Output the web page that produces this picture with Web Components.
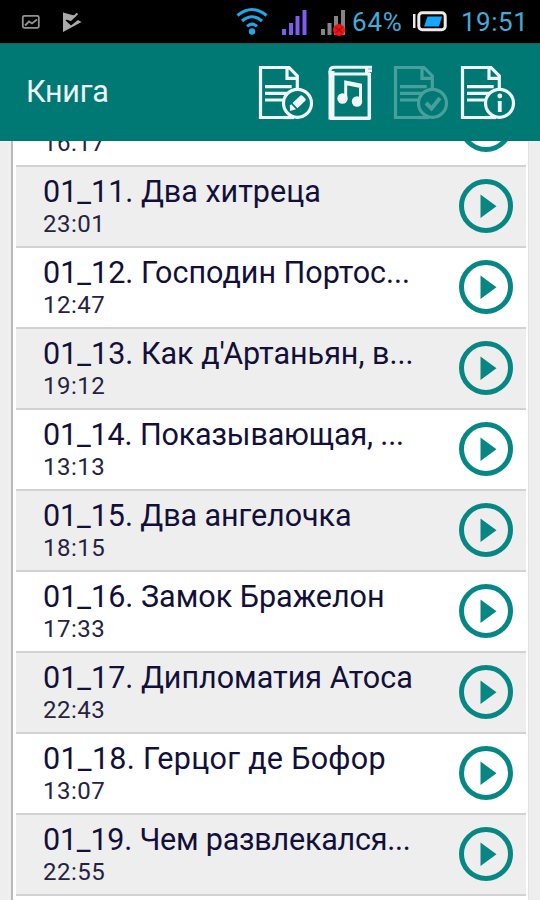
<!DOCTYPE html>
<html lang="ru">
<head>
<meta charset="utf-8">
<title>Книга</title>
<style>
html,body{margin:0;height:100%;overflow:hidden}
body{font-family:Roboto,"Noto Sans",sans-serif;background:#eee}
</style>
</head>
<body>
<book-screen></book-screen>
<script>
const define = (name, html, setup) => {
  const template = document.createElement('template');
  template.innerHTML = html;
  customElements.define(name, class extends HTMLElement {
    constructor() {
      super();
      this.attachShadow({mode: 'open'}).append(template.content.cloneNode(true));
    }
    connectedCallback() { if (setup) setup(this, this.shadowRoot); }
  });
};

define('status-bar', `
<style>
:host{display:flex;align-items:center;height:43px;box-sizing:border-box;background:#000;color:#42abd8;font-size:26px;line-height:43px;white-space:nowrap}
svg{display:block;flex:none}
.pct{width:62px;padding-left:1px;box-sizing:border-box;letter-spacing:.8px;margin-top:2px}
.time{margin-left:14px;letter-spacing:.5px;margin-top:2px}
</style>
<svg width="351" height="43" viewBox="0 0 351 43" fill="none">
  <rect x="22.800" y="15.800" width="16" height="12" rx="1.500" stroke="#929292" stroke-width="1.800"/>
  <path d="M25 25.500l4-4 3 2 5-4" stroke="#929292" stroke-width="1.800"/>
  <path d="M63 12.500V32L81.500 22l-3.500-2-7 5.500-5.500-5 2-2 3.500 2.500 5-5z" fill="#aaa"/>
  <path d="M63 12.500L72 17.500L70.500 21L65 19L63 24Z" fill="#aaa"/>
  <path d="M70.500 19.500l7-6" stroke="#aaa" stroke-width="2"/>
  <g stroke="#1fa7ec" stroke-width="3">
    <path d="M237.500 15.500Q252 3.500 266.500 15.500"/>
    <path d="M242 21Q252 12.500 262 21"/>
    <path d="M247 26.300Q252 22 257 26.300"/>
  </g>
  <circle cx="252" cy="31.500" r="3.200" fill="#1fa7ec"/>
  <path d="M282 29h4v6h-4zM289 23h4v12h-4zM295.500 16h4v19h-4zM302.500 10h4v25h-4z" fill="#805df0"/>
  <path d="M321 29h4v6h-4zM327.500 23h4v12h-4zM334 16h4v19h-4zM341 10h4v25h-4z" fill="#858585"/>
  <circle cx="339" cy="30" r="6" fill="#f01216"/>
  <path d="M335.500 27l7 6M335.500 33l7-6" stroke="#b01010" stroke-width="1.200"/>
</svg>
<span class="pct">64%</span>
<svg width="34" height="43" viewBox="0 0 34 43">
  <path d="M0 14h2.500v14H0z" fill="#e8e8e8"/>
  <rect x="5.800" y="12.800" width="26.400" height="17" rx="3.500" fill="none" stroke="#f0ebe8" stroke-width="3"/>
  <path d="M14.500 16.500H29L26 26.500H11z" fill="#13a8fb"/>
</svg>
<time class="time">19:51</time>`);

const PAGE = `<path d="M27 52.500H2.500V2.500H31L39.300 11V25M29 2.500V13.300H39"/><path d="M7 21.700H33.700M7 28.300H29.700M7 35H25"/><circle cx="39.500" cy="38.300" r="14"/><path d="M25 52.500H36"/>`;
const GLYPHS = {
  edit: PAGE + `<path class="solid" d="M34.500 38L42.500 30.500Q43.500 29.800 44.500 30.800L47.500 33.800Q48.300 34.800 47.300 35.800L39.500 43.300ZM33.300 39.300L38 44.300L32 46L31.800 40.500Z"/>`,
  check: PAGE + `<path d="M33 38L38.500 43.500L47 33" stroke-width="4"/>`,
  info: PAGE + `<path d="M39.800 36V47" stroke-width="3.800"/><path d="M37.800 36.800H41" stroke-width="1.600"/><circle class="solid" cx="39.800" cy="31" r="2.400"/>`,
  music: `<path d="M4.500 6V54.500" stroke-width="6"/><path d="M3 9V6Q3 2.300 7.500 2.300H45M6 9H43M39.500 2V9M40 5.700H45" stroke-width="3"/><path d="M3 53.300H43M42.300 8V54.500" stroke-width="3.500"/><path d="M18.700 33.500V17L33.500 20V35.500M18.700 18.500L33.500 21.500" stroke-width="3"/><circle class="solid" cx="15.500" cy="33.500" r="5.200"/><circle class="solid" cx="30" cy="36.500" r="5.200"/>`
};
define('tool-icon', `
<style>
:host{display:block;width:56px;height:56px}
:host([disabled]){opacity:.3}
svg{display:block;overflow:visible;fill:none;stroke:#f1f7f7;stroke-width:3.200}
.solid{fill:#f1f7f7;stroke:none}
</style><svg width="56" height="56" viewBox="0 0 56 56"></svg>`,
(host, root) => { root.querySelector('svg').innerHTML = GLYPHS[host.getAttribute('glyph')]; });

define('app-bar', `
<style>
:host{display:flex;height:98px;box-sizing:border-box;background:#007975;color:#edf6f5;padding:0 25px 0 26px;align-items:flex-start;box-shadow:inset 0 1px #16615e}
.heading{font:400 30.500px/36px Roboto,sans-serif;letter-spacing:-.25px;padding-top:31px;flex:1}
nav{display:grid;grid-template-columns:69px 66px 67px 55px;margin-top:22px}
</style>
<div class="heading"><slot></slot></div>
<nav>
  <tool-icon glyph="edit"></tool-icon><tool-icon glyph="music"></tool-icon>
  <tool-icon glyph="check" disabled></tool-icon><tool-icon glyph="info"></tool-icon>
</nav>`);

define('play-button', `
<style>:host{display:block;width:54px;height:54px}svg{display:block}</style>
<svg width="54" height="54" viewBox="0 0 54 54"><circle cx="27" cy="27" r="24.500" fill="none" stroke="#078783" stroke-width="5"/><path d="M21.500 15.500V39L37.500 27.200Z" fill="#078783"/></svg>`);

define('track-row', `
<style>
:host{display:flex;justify-content:space-between;height:81px;box-sizing:border-box;border-bottom:2px solid #d2d2d2;padding:0 13px 0 27px;color:#121039;background:#fff}
:host(:nth-of-type(even)){background:#eee}
.title{font-size:30.500px;line-height:36px;height:36px;margin-top:7px;white-space:pre;letter-spacing:var(--track,0)}
.time{font-size:24px;line-height:28px;letter-spacing:.5px;color:#25233f}
play-button{margin-top:12px}
</style>
<div><div class="title"><slot></slot></div><div class="time"></div></div><play-button></play-button>`,
(host, root) => { root.querySelector('.time').textContent = host.getAttribute('time'); });

define('book-screen', `
<style>
:host{display:flex;flex-direction:column;width:540px;height:900px;overflow:hidden}
status-bar,app-bar{flex:none}
main{flex:1;min-height:0;overflow:hidden;background:#eee;padding:0 11px}
section{background:#fff;border-left:2px solid #bbb;border-right:1px solid #e2e2e2;padding:0 2px 0 3px;height:100%;box-sizing:border-box;overflow:hidden}
.tracks{margin-top:-55px}
</style>
<status-bar></status-bar><app-bar>Книга</app-bar>
<main><section><div class="tracks">
<track-row time="16:17"></track-row>
<track-row time="23:01">01_11. Два хитреца</track-row>
<track-row time="12:47">01_12. Господин Портос...</track-row>
<track-row time="19:12">01_13. Как д'Артаньян, в...</track-row>
<track-row time="13:13" style="--track:-.15px">01_14. Показывающая, ...</track-row>
<track-row time="18:15" style="--track:-.08px">01_15. Два ангелочка</track-row>
<track-row time="17:33">01_16. Замок Бражелон</track-row>
<track-row time="22:43">01_17. Дипломатия Атоса</track-row>
<track-row time="13:07" style="--track:.28px">01_18. Герцог де Бофор</track-row>
<track-row time="22:55" style="--track:-.22px">01_19. Чем развлекался...</track-row>
<track-row time=""></track-row>
</div></section></main>`);
</script>
</body>
</html>
